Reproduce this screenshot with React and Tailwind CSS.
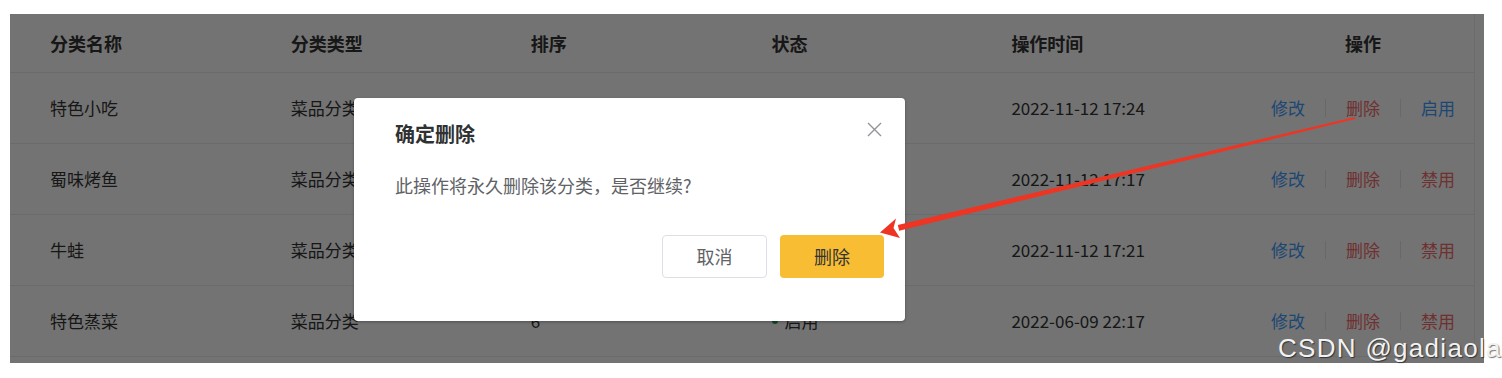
import React from "react";

const rows = [
  { name: "特色小吃", type: "菜品分类", sort: "1", on: false, time: "2022-11-12 17:24" },
  { name: "蜀味烤鱼", type: "菜品分类", sort: "4", on: true, time: "2022-11-12 17:17" },
  { name: "牛蛙", type: "菜品分类", sort: "5", on: true, time: "2022-11-12 17:21" },
  { name: "特色蒸菜", type: "菜品分类", sort: "6", on: true, time: "2022-06-09 22:17" },
];

const cjk = "font-['Microsoft_YaHei','Noto_Sans_CJK_SC',sans-serif]";

function Row({ r }) {
  return (
    <div className="flex h-[71px] items-center border-b border-[#ebeef5] text-[17px] text-[#333]">
      <div className="w-[241px] pl-[40px]">{r.name}</div>
      <div className="w-[240px] pl-[40px]">{r.type}</div>
      <div className="w-[241px] pl-[40px]">{r.sort}</div>
      <div className="w-[240px] pl-[40px] flex items-center gap-[7px]">
        <span className={`size-[6px] rounded-full ${r.on ? "bg-[#22a35a]" : "bg-[#999]"}`}></span>
        <span>{r.on ? "启用" : "禁用"}</span>
      </div>
      <div className="w-[281px] pl-[40px]">{r.time}</div>
      <div className="w-[222px] flex items-center justify-center">
        <span className="text-[#409eff]">修改</span>
        <span className="mx-[20px] h-[18px] w-px bg-[#e4e7ed]"></span>
        <span className="text-[#f56c6c]">删除</span>
        <span className="mx-[20px] h-[18px] w-px bg-[#e4e7ed]"></span>
        <span className={r.on ? "text-[#f56c6c]" : "text-[#409eff]"}>{r.on ? "禁用" : "启用"}</span>
      </div>
    </div>
  );
}

export default function App() {
  return (
    <div className={`relative w-[1502px] h-[378px] bg-white ${cjk} leading-normal`}>
      <div className="pt-[14px] pl-[10px]">
        <div className="relative w-[1474px] h-[349px] overflow-hidden bg-white">
          <div className="flex">
            <div className="w-[1465px] border-r border-[#ebeef5]">
              {/* header */}
              <div className="flex h-[59px] items-center border-b border-[#ebeef5] text-[18px] font-bold text-[#333]">
                <div className="w-[241px] pl-[40px]">分类名称</div>
                <div className="w-[240px] pl-[40px]">分类类型</div>
                <div className="w-[241px] pl-[40px]">排序</div>
                <div className="w-[240px] pl-[40px]">状态</div>
                <div className="w-[281px] pl-[40px]">操作时间</div>
                <div className="w-[222px] text-center">操作</div>
              </div>
              {rows.map((r) => (
                <Row key={r.name} r={r} />
              ))}
            </div>
          </div>

          {/* mask */}
          <div className="absolute inset-0 bg-black/55"></div>

          {/* dialog */}
          <div className="absolute left-[344px] top-[84px] w-[551px] h-[223px] rounded-[4px] bg-white shadow-[0_1px_3px_rgba(0,0,0,0.3)] flex flex-col pl-[41px] pr-[21px] pt-[21px]">
            <div className="flex items-center justify-between h-[30px]">
              <span className="text-[20px] font-bold text-[#303133]">确定删除</span>
              <svg width="15" height="15" viewBox="0 0 15 15" className="mr-[2px] -mt-[10px]">
                <path d="M1 1 L14 14 M14 1 L1 14" stroke="#909399" strokeWidth="1.4" />
              </svg>
            </div>
            <div className="mt-[23px] text-[18px] leading-[27px] text-[#606266]">
              此操作将永久删除该分类，是否继续?
            </div>
            <div className="mt-[36px] flex justify-end gap-[13px]">
              <button className="w-[105px] h-[43px] rounded-[4px] border border-[#dcdfe6] bg-white text-[18px] text-[#606266]">
                取消
              </button>
              <button className="w-[104px] h-[43px] rounded-[4px] bg-[#f8bd33] text-[18px] text-[#333]">
                删除
              </button>
            </div>
          </div>
        </div>
      </div>

      {/* annotation arrow */}
      <svg className="absolute inset-0 pointer-events-none" width="1502" height="378">
        <polygon
          points="1355.2,119 1354.8,117 897.8,224.9 899.2,230.7"
          fill="#ee3524"
        />
        <polygon points="880,232.5 896,218.5 893.5,228 900,238" fill="#ee3524" />
      </svg>

      {/* watermark */}
      <div className="absolute left-[1278px] top-[333px] font-['Liberation_Sans',Arial,sans-serif] text-[26px] leading-[30px] tracking-[1.3px] whitespace-nowrap text-[#f2f2f2] [text-shadow:1px_1px_1px_rgba(0,0,0,0.55)]">
        CSDN @gadiaola
      </div>
    </div>
  );
}
